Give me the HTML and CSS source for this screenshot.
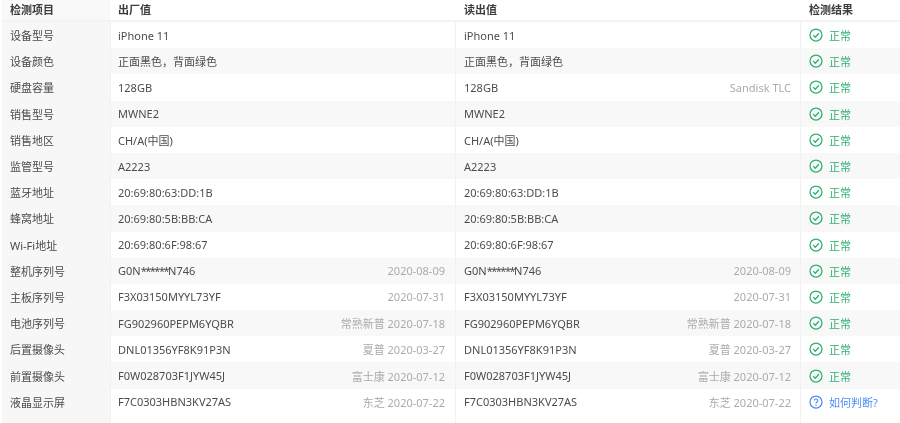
FILE: index.html
```html
<!DOCTYPE html>
<html lang="zh-CN">
<head>
<meta charset="utf-8">
<title>检测报告</title>
<link rel="stylesheet" href="styles.css">
</head>
<body>
<svg class="defs" width="0" height="0" aria-hidden="true">
  <symbol id="ok" viewBox="0 0 14 14"><circle cx="7" cy="7" r="6" fill="none" stroke="#2fb070" stroke-width="1.25"/><path d="M4.2 7.1 6.3 9.2 9.9 5.2" fill="none" stroke="#2fb070" stroke-width="1.3"/></symbol>
  <symbol id="ask" viewBox="0 0 14 14"><circle cx="7" cy="7" r="6" fill="none" stroke="#4d8cf5" stroke-width="1.25"/><path d="M5.2 5.6C5.2 4.6 6 4 7 4s1.8.7 1.8 1.6c0 1.4-1.8 1.4-1.8 2.9" fill="none" stroke="#4d8cf5" stroke-width="1.2"/><circle cx="7" cy="10.2" r=".75" fill="#4d8cf5"/></symbol>
</svg>
<main class="report">
  <div class="row head"><div class="cell item">检测项目</div><div class="cell">出厂值</div><div class="cell">读出值</div><div class="cell result">检测结果</div></div>
  <div class="row"><div class="cell item">设备型号</div><div class="cell">iPhone 11</div><div class="cell">iPhone 11</div><div class="cell result good"><svg class="icon"><use href="#ok"/></svg>正常</div></div>
  <div class="row alt"><div class="cell item">设备颜色</div><div class="cell">正面黑色，背面绿色</div><div class="cell">正面黑色，背面绿色</div><div class="cell result good"><svg class="icon"><use href="#ok"/></svg>正常</div></div>
  <div class="row"><div class="cell item">硬盘容量</div><div class="cell">128GB</div><div class="cell"><span>128GB</span><span class="note">Sandisk TLC</span></div><div class="cell result good"><svg class="icon"><use href="#ok"/></svg>正常</div></div>
  <div class="row alt"><div class="cell item">销售型号</div><div class="cell">MWNE2</div><div class="cell">MWNE2</div><div class="cell result good"><svg class="icon"><use href="#ok"/></svg>正常</div></div>
  <div class="row"><div class="cell item">销售地区</div><div class="cell">CH/A(中国)</div><div class="cell">CH/A(中国)</div><div class="cell result good"><svg class="icon"><use href="#ok"/></svg>正常</div></div>
  <div class="row alt"><div class="cell item">监管型号</div><div class="cell">A2223</div><div class="cell">A2223</div><div class="cell result good"><svg class="icon"><use href="#ok"/></svg>正常</div></div>
  <div class="row"><div class="cell item">蓝牙地址</div><div class="cell">20:69:80:63:DD:1B</div><div class="cell">20:69:80:63:DD:1B</div><div class="cell result good"><svg class="icon"><use href="#ok"/></svg>正常</div></div>
  <div class="row alt"><div class="cell item">蜂窝地址</div><div class="cell">20:69:80:5B:BB:CA</div><div class="cell">20:69:80:5B:BB:CA</div><div class="cell result good"><svg class="icon"><use href="#ok"/></svg>正常</div></div>
  <div class="row"><div class="cell item">Wi-Fi地址</div><div class="cell">20:69:80:6F:98:67</div><div class="cell">20:69:80:6F:98:67</div><div class="cell result good"><svg class="icon"><use href="#ok"/></svg>正常</div></div>
  <div class="row alt"><div class="cell item">整机序列号</div><div class="cell"><span>G0N<span class="mask">******</span>N746</span><span class="note">2020-08-09</span></div><div class="cell"><span>G0N<span class="mask">******</span>N746</span><span class="note">2020-08-09</span></div><div class="cell result good"><svg class="icon"><use href="#ok"/></svg>正常</div></div>
  <div class="row"><div class="cell item">主板序列号</div><div class="cell"><span>F3X03150MYYL73YF</span><span class="note">2020-07-31</span></div><div class="cell"><span>F3X03150MYYL73YF</span><span class="note">2020-07-31</span></div><div class="cell result good"><svg class="icon"><use href="#ok"/></svg>正常</div></div>
  <div class="row alt"><div class="cell item">电池序列号</div><div class="cell"><span>FG902960PEPM6YQBR</span><span class="note">常熟新普 2020-07-18</span></div><div class="cell"><span>FG902960PEPM6YQBR</span><span class="note">常熟新普 2020-07-18</span></div><div class="cell result good"><svg class="icon"><use href="#ok"/></svg>正常</div></div>
  <div class="row"><div class="cell item">后置摄像头</div><div class="cell"><span>DNL01356YF8K91P3N</span><span class="note">夏普 2020-03-27</span></div><div class="cell"><span>DNL01356YF8K91P3N</span><span class="note">夏普 2020-03-27</span></div><div class="cell result good"><svg class="icon"><use href="#ok"/></svg>正常</div></div>
  <div class="row alt"><div class="cell item">前置摄像头</div><div class="cell"><span>F0W028703F1JYW45J</span><span class="note">富士康 2020-07-12</span></div><div class="cell"><span>F0W028703F1JYW45J</span><span class="note">富士康 2020-07-12</span></div><div class="cell result good"><svg class="icon"><use href="#ok"/></svg>正常</div></div>
  <div class="row"><div class="cell item">液晶显示屏</div><div class="cell"><span>F7C0303HBN3KV27AS</span><span class="note">东芝 2020-07-22</span></div><div class="cell"><span>F7C0303HBN3KV27AS</span><span class="note">东芝 2020-07-22</span></div><div class="cell result link"><svg class="icon"><use href="#ask"/></svg>如何判断?</div></div>
  <div class="row"><div class="cell item"></div><div class="cell"></div><div class="cell"></div><div class="cell result"></div></div>
</main>
</body>
</html>
```

FILE: styles.css
```css
* { box-sizing: border-box; }
html, body { margin: 0; height: 100%; overflow: hidden; background: #fff; }
body {
  font-family: "Noto Sans", "Noto Sans CJK SC", sans-serif;
  font-size: 11px;
  color: #4c4c4c;
}
.defs { position: absolute; }
.report { padding-left: 2px; filter: blur(0.3px); }
.row {
  display: grid;
  grid-template-columns: 108px 345px 345px 100px;
  height: 26.2px;
  align-items: stretch;
}
.alt { background: #f8f8f8; }
.head {
  height: 22px;
  font-weight: 700;
  color: #3c3c3c;
  border-bottom: 2px solid #f3f3f3;
}
.cell {
  display: flex;
  align-items: center;
  justify-content: space-between;
  padding: 0 10px 0 7px;
  border-left: 1px solid #f1f1f1;
  white-space: nowrap;
}
.cell:nth-child(3) { padding: 0 9px 0 8px; }
.head .cell { border-left-color: transparent; padding-bottom: 2px; }
.item {
  padding-left: 8px;
  background: #f7f7f7;
  border-left: 0;
}
.head .item { background: #f9f9f9; }
.mask { letter-spacing: -1.5px; }
.note { color: #ababab; }
.result { justify-content: flex-start; padding-left: 8px; padding-right: 0; }
.good { color: #2fb070; }
.link { color: #4d8cf5; }
.icon { width: 14px; height: 14px; margin-right: 6px; flex: none; }
```
